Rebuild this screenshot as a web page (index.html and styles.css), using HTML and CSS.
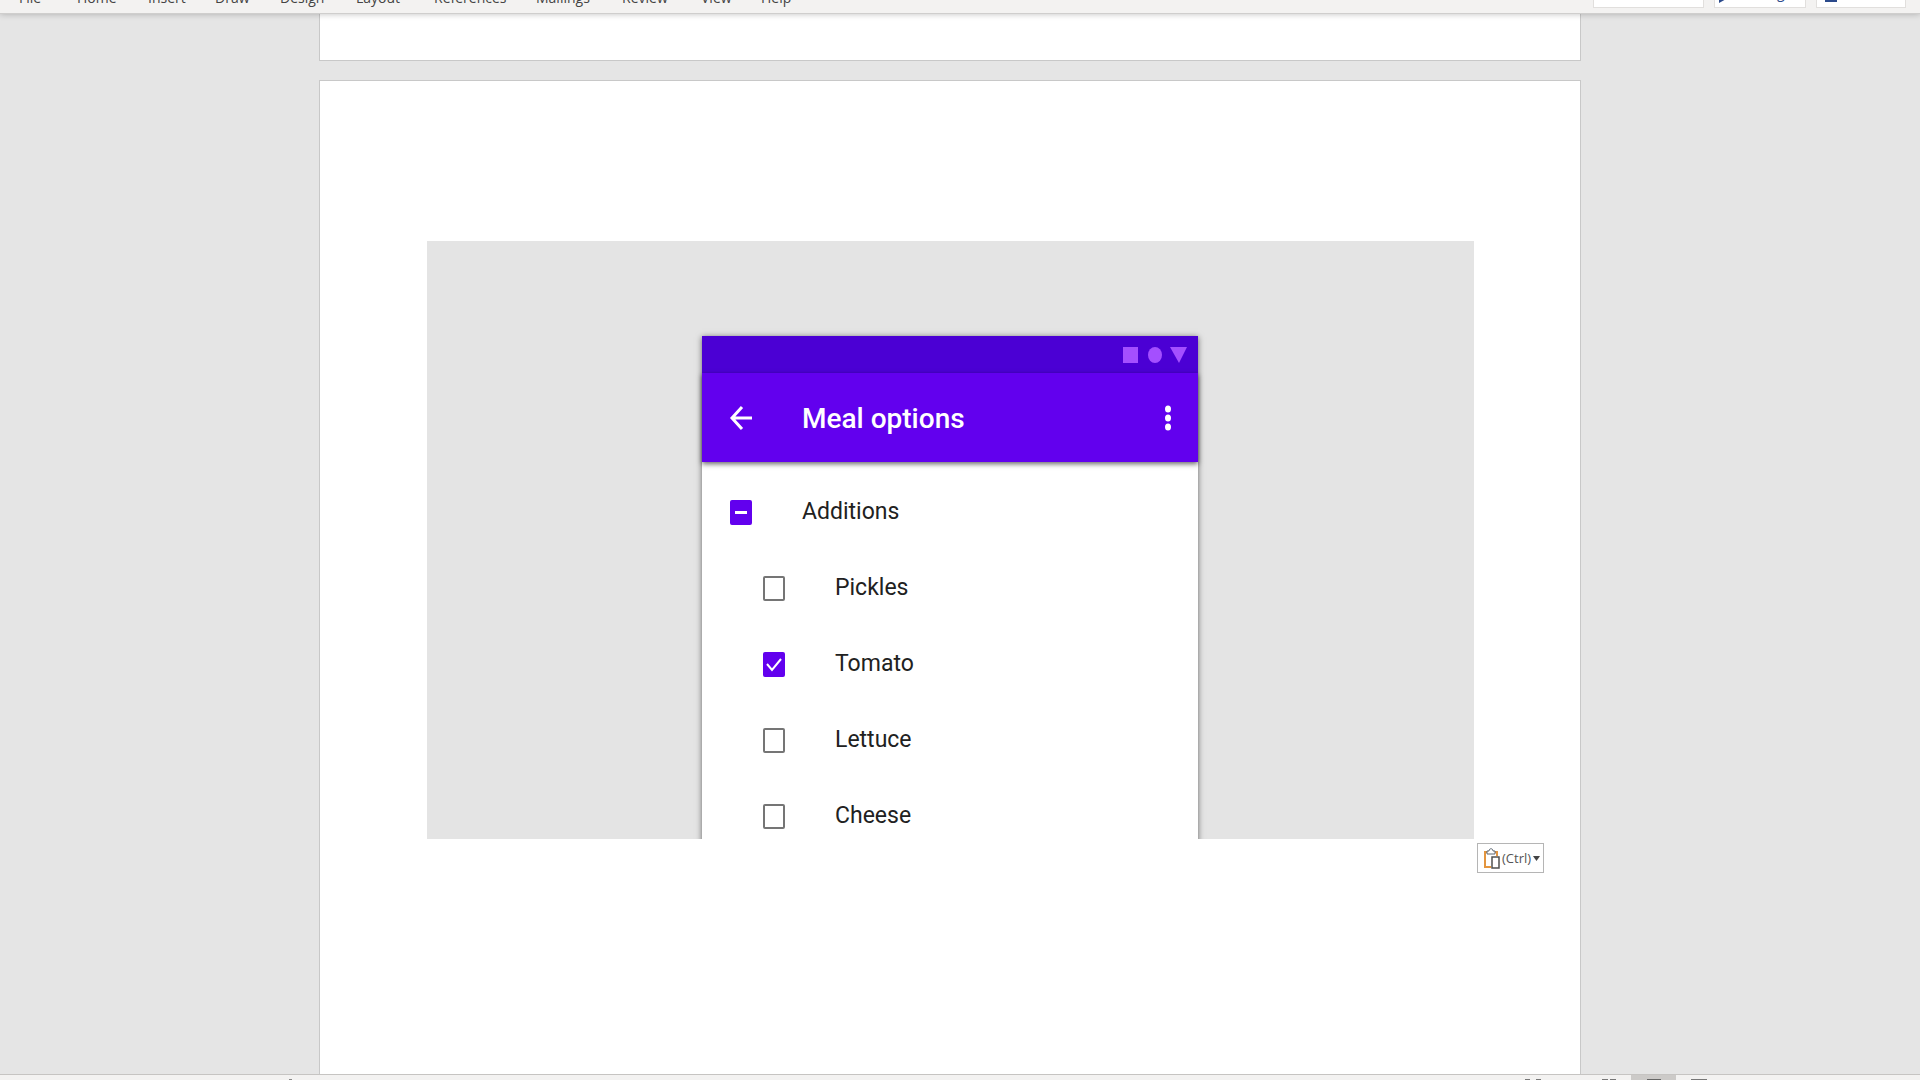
FILE: index.html
```html
<!DOCTYPE html>
<html lang="en">
<head>
<meta charset="utf-8">
<title>Document</title>
<link rel="stylesheet" href="styles.css">
</head>
<body class="app">
<header class="ribbon">
  <nav class="tabs">
    <a href="#">File</a><a href="#">Home</a><a href="#">Insert</a><a href="#">Draw</a><a href="#">Design</a><a href="#">Layout</a><a href="#">References</a><a href="#">Mailings</a><a href="#">Review</a><a href="#">View</a><a href="#">Help</a>
  </nav>
  <div class="actions">
    <input class="action search" type="text" aria-label="Search">
    <button class="action editing" type="button"><svg width="14" height="16" viewBox="0 0 14 16"><path d="M1 3v13l9-5z" fill="#2b4a8b"/></svg><span>Editing</span></button>
    <button class="action share" type="button" aria-label="Share"><svg width="12" height="12" viewBox="0 0 12 12"><path d="M1 4V11H11V4" fill="none" stroke="#2b4a8b" stroke-width="2"/></svg></button>
  </div>
</header>
<main class="workspace">
  <section class="page page-previous"></section>
  <section class="page page-current">
    <div class="picture">
      <div class="backdrop">
        <div class="phone">
          <div class="phone-status">
            <svg width="64" height="18" viewBox="0 0 64 18" fill="#a44fff"><path d="M0 1h15v16H0z"/><ellipse cx="32" cy="9" rx="7" ry="8"/><path d="M47 1h17l-8 16z"/></svg>
          </div>
          <div class="phone-bar">
            <button class="icon-button" type="button" aria-label="Back"><svg width="24" height="26" viewBox="0 0 24 26" fill="none" stroke="#fff" stroke-width="3"><path d="M23 13H3M13 2 3 13l10 11"/></svg></button>
            <h1 class="phone-title">Meal options</h1>
            <button class="icon-button" type="button" aria-label="More options"><svg width="8" height="26" viewBox="0 0 8 26" fill="#fff"><ellipse cx="4" cy="4" rx="3" ry="3.500"/><ellipse cx="4" cy="13" rx="3" ry="3.500"/><ellipse cx="4" cy="22" rx="3" ry="3.500"/></svg></button>
          </div>
          <div class="options">
            <label class="option"><input class="check" id="additions" type="checkbox">Additions</label>
            <label class="option nested"><input class="check" type="checkbox">Pickles</label>
            <label class="option nested"><input class="check" type="checkbox" checked>Tomato</label>
            <label class="option nested"><input class="check" type="checkbox">Lettuce</label>
            <label class="option nested"><input class="check" type="checkbox">Cheese</label>
          </div>
        </div>
      </div>
      <button class="paste" type="button">
        <svg width="17" height="21" viewBox="0 0 17 21" fill="none"><path d="M8 19H2V4h3M11 4h3v4" stroke="#e3953f" stroke-width="2"/><path d="M4 6V3h2c0-3 4-3 4 0h2v3z" stroke="#5b6570" fill="#fff"/><path d="M9 9h7v11H9z" stroke="#505050" stroke-width="1.5" fill="#fff"/></svg>
        <span>(Ctrl)</span>
        <svg width="7" height="5" viewBox="0 0 7 5"><path d="M0 0h7L3.500 5z" fill="#444"/></svg>
      </button>
    </div>
  </section>
</main>
<footer class="statusbar">
  <svg class="proofing" width="4" height="5" viewBox="0 0 4 5"><path d="M0 4h3v1H0z" fill="#888"/></svg>
  <div class="views">
    <button class="view focus" type="button" aria-label="Focus"><svg width="16" height="5" viewBox="0 0 16 5"><path d="M0 4.500h5M11 4.500h5" stroke="#777"/></svg></button>
    <button class="view" type="button" aria-label="Read mode"><svg width="16" height="5" viewBox="0 0 16 5"><path d="M1 4.500h6M9 4.500h6" stroke="#777"/></svg></button>
    <button class="view selected" type="button" aria-label="Print layout"><svg width="16" height="5" viewBox="0 0 16 5"><path d="M1 4.500h14" stroke="#666"/></svg></button>
    <button class="view" type="button" aria-label="Web layout"><svg width="16" height="5" viewBox="0 0 16 5"><path d="M0 4.500h16" stroke="#777"/></svg></button>
  </div>
</footer>
<script src="app.js"></script>
</body>
</html>
```
FILE: styles.css
```css
* { box-sizing: border-box; }
.app {
  margin: 0;
  height: 100vh;
  overflow: hidden;
  display: flex;
  flex-direction: column;
  background: #e5e5e5;
  font-family: "Open Sans", "Noto Sans", sans-serif;
}
button { font: inherit; padding: 0; border: 0; background: none; }
svg { display: block; flex: none; }

.ribbon {
  flex: none;
  height: 14px;
  display: flex;
  justify-content: space-between;
  align-items: flex-end;
  padding: 0 14px 0 19px;
  background: #f3f2f1;
  border-bottom: 1px solid #cfcecd;
  box-shadow: 0 0 6px #00000040;
  z-index: 1;
}
.tabs {
  display: grid;
  grid-template-columns: 58px 71px 67px 65px 76px 78px 102px 86px 79px 60px 40px;
  padding-bottom: 5px;
  font-size: 14px;
  line-height: 20px;
}
.tabs a { color: #444; text-decoration: none; }
.actions { display: flex; gap: 10px; padding-bottom: 5px; }
.action {
  height: 32px;
  background: #fff;
  border: 1px solid #e1dfdd;
  color: #2b4a8b;
  font-size: 14px;
  line-height: 20px;
  display: flex;
  align-items: flex-end;
}
.search { width: 111px; }
.editing { width: 92px; gap: 8px; padding: 0 3px 4px; }
.share { width: 90px; padding: 0 8px 5px; }

.workspace {
  flex: 1;
  min-height: 0;
  overflow: hidden;
  display: flex;
  flex-direction: column;
  align-items: center;
  gap: 19px;
  padding-right: 20px;
}
.page { width: 1262px; max-width: 100%; background: #fff; border: 1px solid #c8c8c8; flex: none; }
.page-previous { height: 47px; border-top: 0; }
.page-current { min-height: 1000px; padding: 160px 106px 160px 107px; }
.picture { position: relative; }
.backdrop {
  aspect-ratio: 1047 / 598;
  overflow: hidden;
  padding: 95px 1px 0 0;
  background: #e4e4e4;
}
.phone {
  width: 496px;
  margin: 0 auto;
  background: #fff;
  box-shadow: 0 1px 6px #00000090;
  font-family: Roboto, sans-serif;
}
.phone-status {
  height: 37px;
  display: flex;
  align-items: center;
  justify-content: flex-end;
  padding-right: 11px;
  background: #4b00d4;
}
.phone-bar {
  height: 89px;
  display: flex;
  align-items: center;
  padding: 0 26px 0 27px;
  background: #6200ee;
  box-shadow: 0 2px 5px #00000099;
}
.phone-title {
  flex: 1;
  margin: 0;
  padding: 3px 0 0 49px;
  color: #fff;
  font-size: 28px;
  line-height: 36px;
  font-weight: 500;
}
.options { padding-top: 12px; }
.option {
  height: 76px;
  display: flex;
  align-items: center;
  gap: 50px;
  padding-left: 28px;
  color: #212121;
  font-size: 23px;
  line-height: 32px;
}
.nested { padding-left: 61px; }
.check {
  appearance: none;
  flex: none;
  width: 22px;
  height: 25px;
  margin: 0;
  border: 2px solid #757575;
  border-radius: 2px;
  background: center / 18px 21px no-repeat;
}
.check:checked, .check:indeterminate { background-color: #6200ee; border-color: #6200ee; }
.check:checked { background-image: url("data:image/svg+xml,%3Csvg xmlns='http://www.w3.org/2000/svg' viewBox='0 0 18 21'%3E%3Cpath d='M2 10l5 6L16 5' fill='none' stroke='white' stroke-width='2'/%3E%3C/svg%3E"); }
.check:indeterminate { background-image: linear-gradient(#fff, #fff); background-size: 12px 3px; }

.paste {
  position: absolute;
  top: calc(100% + 4px);
  left: calc(100% + 3px);
  width: 67px;
  height: 30px;
  display: flex;
  align-items: center;
  gap: 2px;
  padding-left: 5px;
  border: 1px solid #b5b5b5;
  background: #fff;
  color: #555;
  font-size: 13px;
  line-height: 20px;
}

.statusbar {
  flex: none;
  height: 6px;
  overflow: hidden;
  display: flex;
  justify-content: space-between;
  padding: 0 199px 0 289px;
  background: #f3f2f1;
  border-top: 1px solid #c6c4c2;
}
.views { display: flex; }
.view { width: 45px; height: 5px; display: flex; justify-content: center; }
.focus { width: 106px; }
.selected { background: #cccac8; }
```
FILE: app.js
```js
document.getElementById("additions").indeterminate = true;
```
